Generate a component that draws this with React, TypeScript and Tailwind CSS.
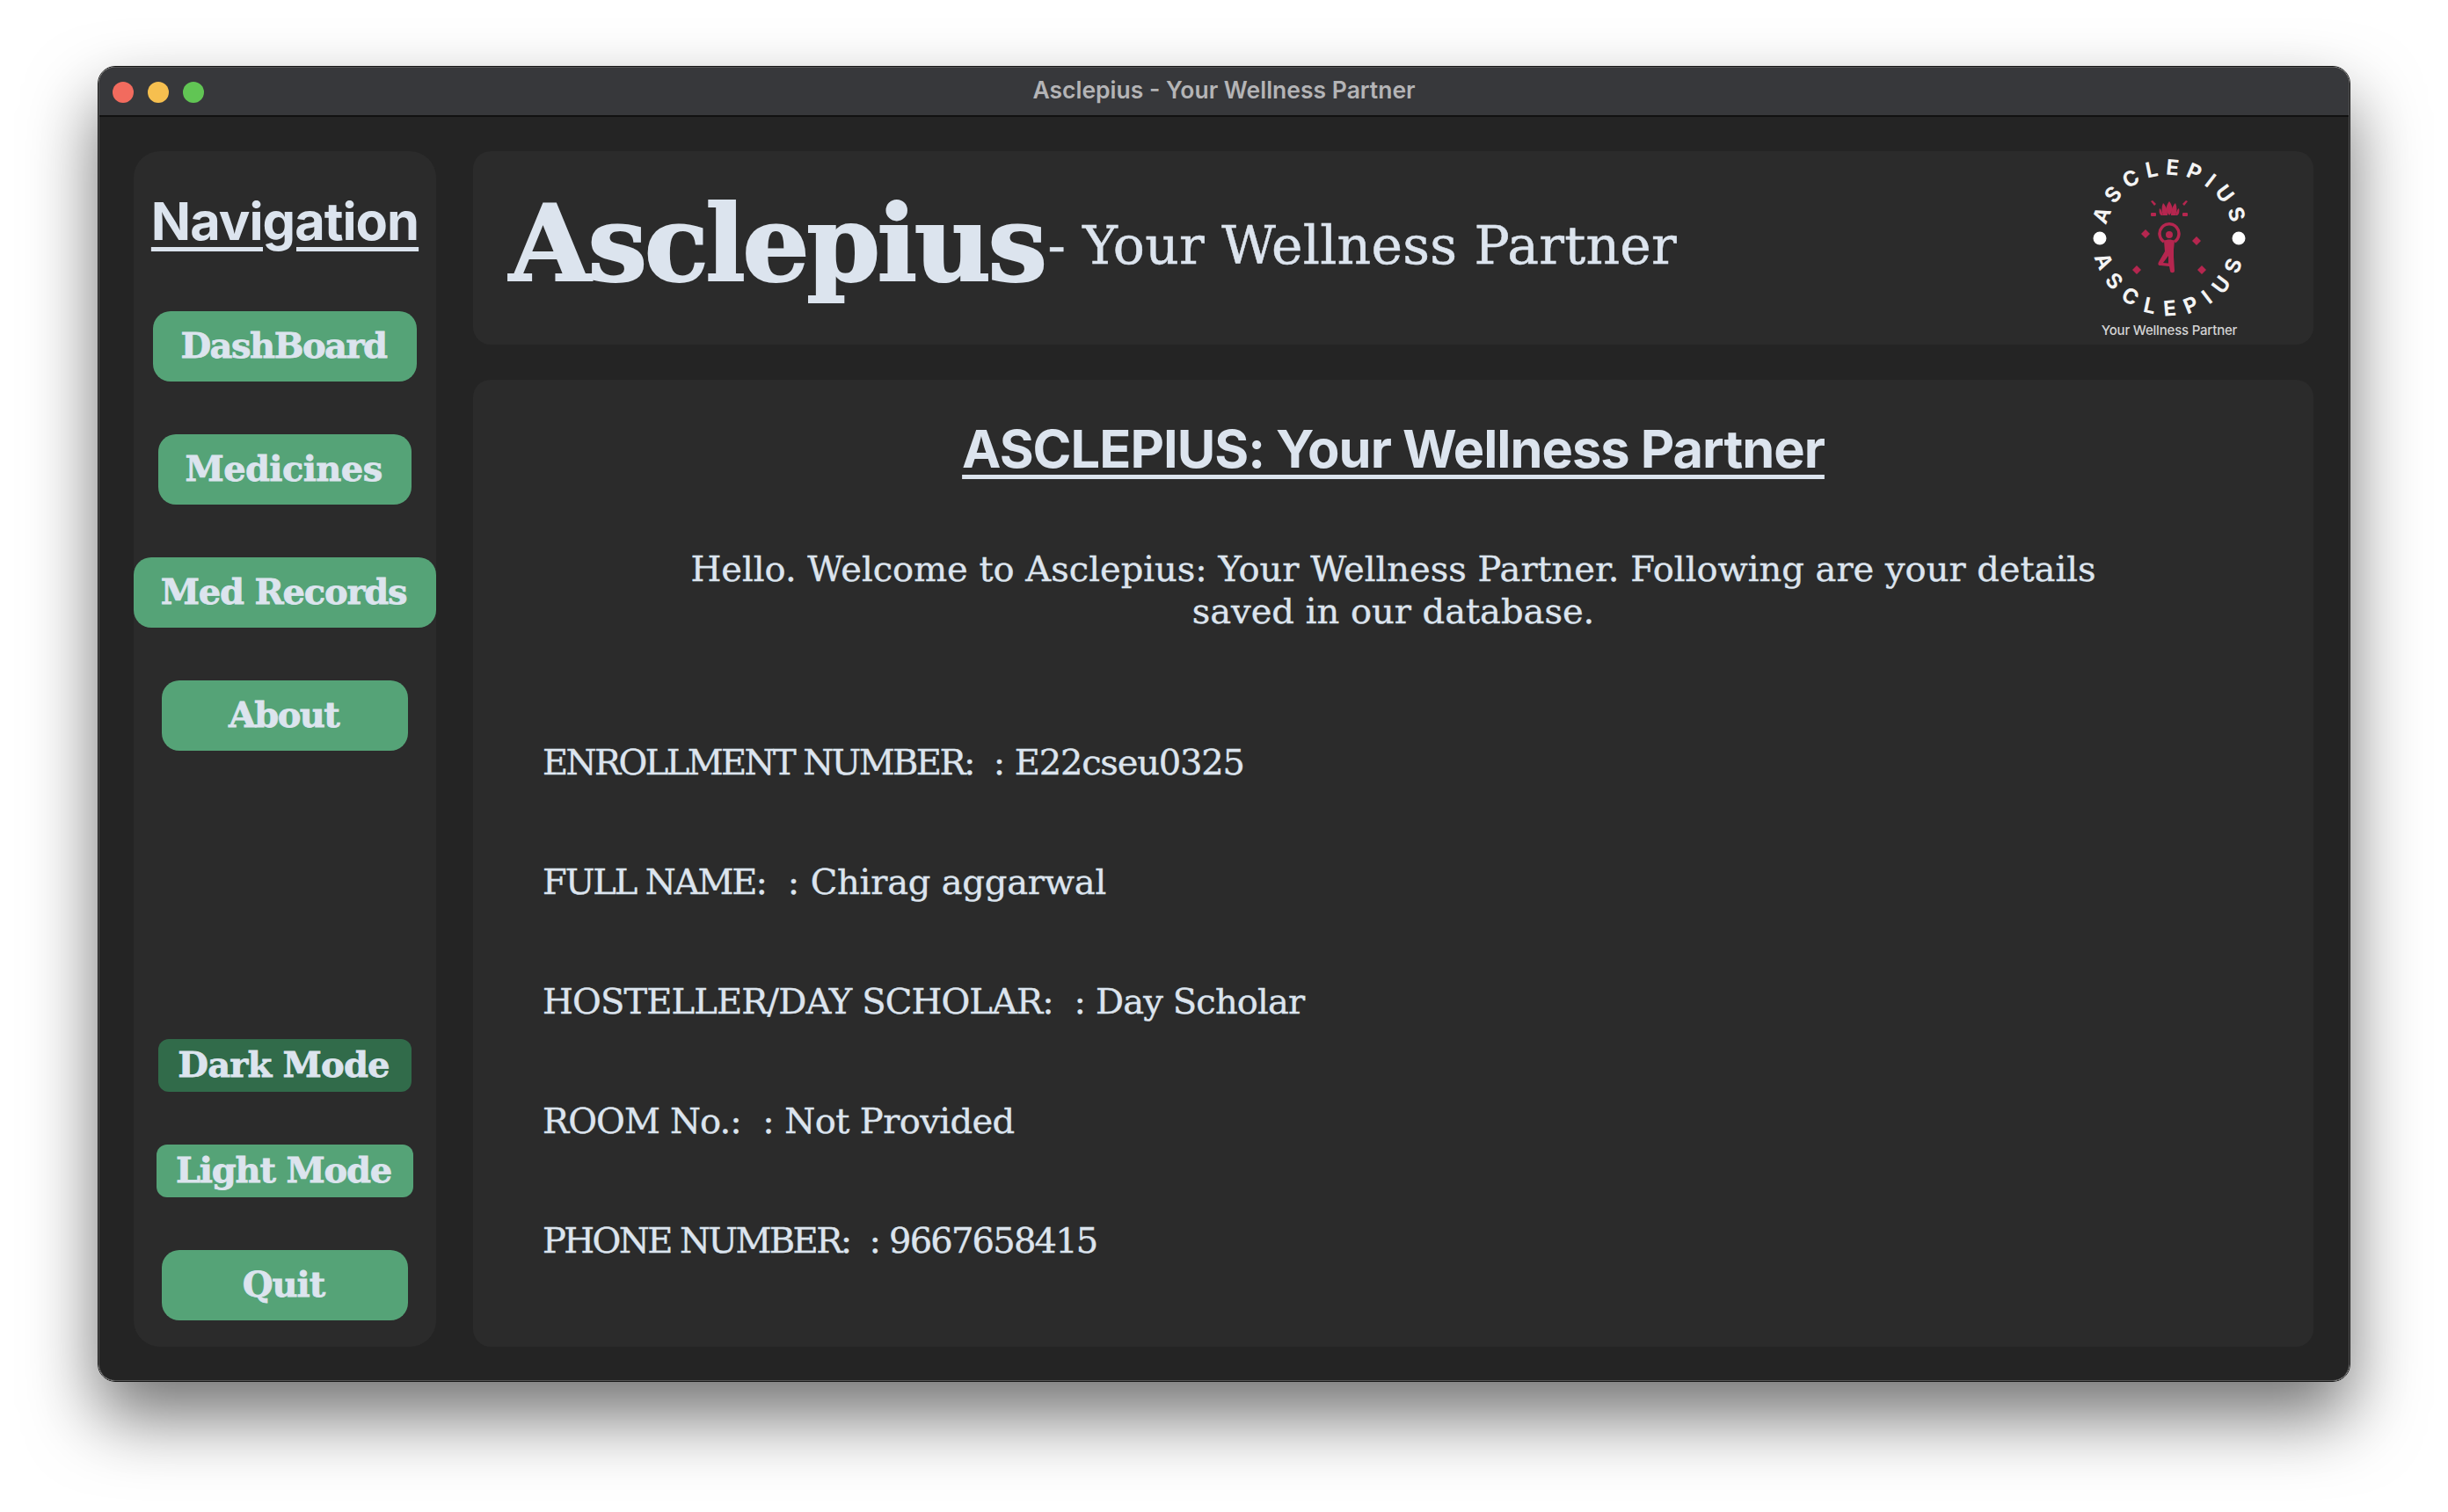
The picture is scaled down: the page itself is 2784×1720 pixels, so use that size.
import React from "react";

// slab font stand-in for Rockwell
const slab = "font-['DejaVu_Serif',serif]";
const btnText = "font-bold text-[40px] text-[#dce4ee] pr-[3px] pb-[3px] [-webkit-text-stroke:0.8px_#dce4ee] flex items-center justify-center";

const navTop = [
  { label: "DashBoard", w: "w-[300px]", mt: "mt-[68px]", track: "tracking-[-1.5px]" },
  { label: "Medicines", w: "w-[288px]", mt: "mt-[60px]", track: "tracking-[-0.6px]" },
  { label: "Med Records", w: "w-[344px]", mt: "mt-[60px]", track: "tracking-[-1.2px]" },
  { label: "About", w: "w-[280px]", mt: "mt-[60px]", track: "tracking-[-1.6px]" },
];

const details = [
  { label: "ENROLLMENT NUMBER:", value: "  : E22cseu0325", labelTrack: "tracking-[-2.6px]", valueTrack: "tracking-[-1.2px]" },
  { label: "FULL NAME:", value: "  : Chirag aggarwal", labelTrack: "tracking-[-2.1px]", valueTrack: "tracking-[-0.2px]" },
  { label: "HOSTELLER/DAY SCHOLAR:", value: "  : Day Scholar", labelTrack: "tracking-[-0.87px]", valueTrack: "tracking-[-0.87px]" },
  { label: "ROOM No.:", value: "  : Not Provided", labelTrack: "tracking-[-0.9px]", valueTrack: "tracking-[-0.57px]" },
  { label: "PHONE NUMBER:", value: "  : 9667658415", labelTrack: "tracking-[-2.6px]", valueTrack: "tracking-[-1.8px]" },
];

const Logo = () => (
  <svg width="200" height="230" viewBox="0 0 200 230" className="shrink-0">
    <defs>
      <path id="arcTop" d="M 27 100 A 73 73 0 0 1 173 100" />
      <path id="arcBottom" d="M 13 100 A 87 87 0 0 0 187 100" />
    </defs>
    <circle cx="21" cy="99" r="7.5" fill="#fff" />
    <circle cx="179" cy="99" r="7.5" fill="#fff" />
    <text fill="#f4f4f4" fontFamily="Inter, sans-serif" fontWeight="700" fontSize="24">
      <textPath href="#arcTop" startOffset="51%" textAnchor="middle" letterSpacing="7.5">ASCLEPIUS</textPath>
    </text>
    <text fill="#f4f4f4" fontFamily="Inter, sans-serif" fontWeight="700" fontSize="24">
      <textPath href="#arcBottom" startOffset="51%" textAnchor="middle" letterSpacing="11.5">ASCLEPIUS</textPath>
    </text>
    <g fill="#b5264f">
      {/* lotus */}
      <path d="M100 57 C104 62 105 68 100 73 C95 68 96 62 100 57Z" />
      <path d="M93 59 C97 63 98 68 98 73 L93 73 C91 69 91 63 93 59Z" />
      <path d="M107 59 C103 63 102 68 102 73 L107 73 C109 69 109 63 107 59Z" />
      <path d="M89 65 C91 66 92 70 93 73 L91 73 C89 72 88 69 89 65Z" />
      <path d="M111 65 C109 66 108 70 107 73 L109 73 C111 72 112 69 111 65Z" />
      <rect x="79" y="70" width="6" height="4" rx="1" />
      <rect x="115" y="70" width="6" height="4" rx="1" />
      <path d="M79 57 l2 -1 l4 4 l-2 2 Z" />
      <path d="M121 57 l-2 -1 l-4 4 l2 2 Z" />
      {/* sparkles */}
      <path d="M68 94 l5 -5 l5 5 l-5 5 Z" />
      <path d="M126 102 l5 -5 l5 5 l-5 5 Z" />
      <path d="M58 135 l5 -5 l5 5 l-5 5 Z" />
      <path d="M132 135 l5 -5 l5 5 l-5 5 Z" />
      {/* tree pose */}
      <circle cx="100" cy="95" r="4" />
      <path d="M94 102 C97 100 103 100 106 102 L105 112 L105 120 L106 136 C106 139 101 139 101 136 L100 131 L90 130 C87 130 87 128 88 126 L95 114 Z" />
    </g>
    <path d="M94 103 A11 11 0 1 1 106 103" fill="none" stroke="#b5264f" strokeWidth="3.5" />
    <path d="M99 119 L93 127 L99 127.5 Z" fill="#2b2b2b" />
    <text x="100" y="209" textAnchor="middle" fill="#d4d4d4" fontFamily="Inter, sans-serif" fontWeight="500" fontSize="15" letterSpacing="-0.2">Your Wellness Partner</text>
  </svg>
);

export default function App() {
  return (
    <div className="min-h-screen w-full bg-white pt-[75px] pl-[111px]">
      <div className="w-[2562px] h-[1497px] rounded-[20px] border border-[#161616] flex flex-col shadow-[0_40px_80px_rgba(0,0,0,0.55)]">
        <div className="flex-1 rounded-[19px] bg-[#242424] border border-[#555] overflow-hidden flex flex-col min-h-0">
          <div className="relative h-[56px] shrink-0 bg-[#37383b] border-b-2 border-[#111] flex items-center justify-center">
            <div className="absolute left-[15px] top-[16px] flex gap-[16px]">
              <span className="w-[24px] h-[24px] rounded-full bg-[#f26b5e]" />
              <span className="w-[24px] h-[24px] rounded-full bg-[#f6bf4f]" />
              <span className="w-[24px] h-[24px] rounded-full bg-[#61c554]" />
            </div>
            <span className="font-['Inter',sans-serif] font-semibold text-[26.5px] -mt-[2px] text-[#b4b4b6]">Asclepius - Your Wellness Partner</span>
          </div>

          <div className="flex-1 flex pl-[39px] pr-[40px] pt-[39px] pb-[38px] gap-[42px] min-h-0">
            <aside className="w-[344px] shrink-0 bg-[#2b2b2b] rounded-[30px] flex flex-col items-center">
              <h2 className="mt-[44px] font-['Inter',sans-serif] font-bold text-[59.5px] leading-[70px] tracking-[-1px] text-[#dce4ee] underline underline-offset-[8px] decoration-[5px]">Navigation</h2>
              {navTop.map((item) => (
                <button key={item.label} className={`${item.w} ${item.mt} ${item.track} h-[80px] shrink-0 rounded-[20px] bg-[#55a377] ${slab} ${btnText}`}>
                  {item.label}
                </button>
              ))}
              <div className="flex-1" />
              <button className={`w-[288px] h-[60px] rounded-[12px] bg-[#316b4a] tracking-[-0.8px] ${slab} ${btnText}`}>Dark Mode</button>
              <button className={`w-[292px] h-[60px] mt-[60px] rounded-[12px] bg-[#55a377] tracking-[-1.2px] ${slab} ${btnText}`}>Light Mode</button>
              <button className={`w-[280px] h-[80px] mt-[60px] mb-[30px] rounded-[20px] bg-[#55a377] tracking-[-1px] ${slab} ${btnText}`}>Quit</button>
            </aside>

            <div className="flex-1 flex flex-col gap-[40px] min-w-0">
              <header className="h-[220px] shrink-0 bg-[#2b2b2b] rounded-[20px] flex items-center pl-[41px] pr-[64px] pb-[10px]">
                <span className={`${slab} font-bold text-[120px] leading-none tracking-[-3.5px] text-[#dce4ee] [-webkit-text-stroke:2px_#dce4ee]`}>Asclepius</span>
                <span className={`${slab} text-[60px] leading-none mt-[4px] ml-[4px] tracking-[0.2px] text-[#dce4ee] [-webkit-text-stroke:0.5px_#dce4ee]`}>- Your Wellness Partner</span>
                <div className="ml-auto mt-[20px]"><Logo /></div>
              </header>

              <main className="flex-1 bg-[#2b2b2b] rounded-[20px] px-[79px] min-h-0">
                <h1 className="mt-[43px] text-center font-['Inter',sans-serif] font-bold text-[59.5px] leading-[70px] tracking-[-1px] text-[#dce4ee] underline underline-offset-[8px] decoration-[5px]">ASCLEPIUS: Your Wellness Partner</h1>
                <p className={`mt-[78px] mx-auto w-[1640px] text-center ${slab} text-[40px] leading-[48px] text-[#dce4ee] [-webkit-text-stroke:0.4px_#dce4ee]`}>
                  Hello. Welcome to Asclepius: Your Wellness Partner. Following are your details saved in our database.
                </p>
                <div className="mt-[124px] flex flex-col gap-[88px]">
                  {details.map((row) => (
                    <p key={row.label} className={`${slab} text-[40px] leading-[48px] text-[#dce4ee] whitespace-pre [-webkit-text-stroke:0.4px_#dce4ee]`}>
                      <span className={row.labelTrack}>{row.label}</span>
                      <span className={row.valueTrack}>{row.value}</span>
                    </p>
                  ))}
                </div>
              </main>
            </div>
          </div>
        </div>
      </div>
    </div>
  );
}
